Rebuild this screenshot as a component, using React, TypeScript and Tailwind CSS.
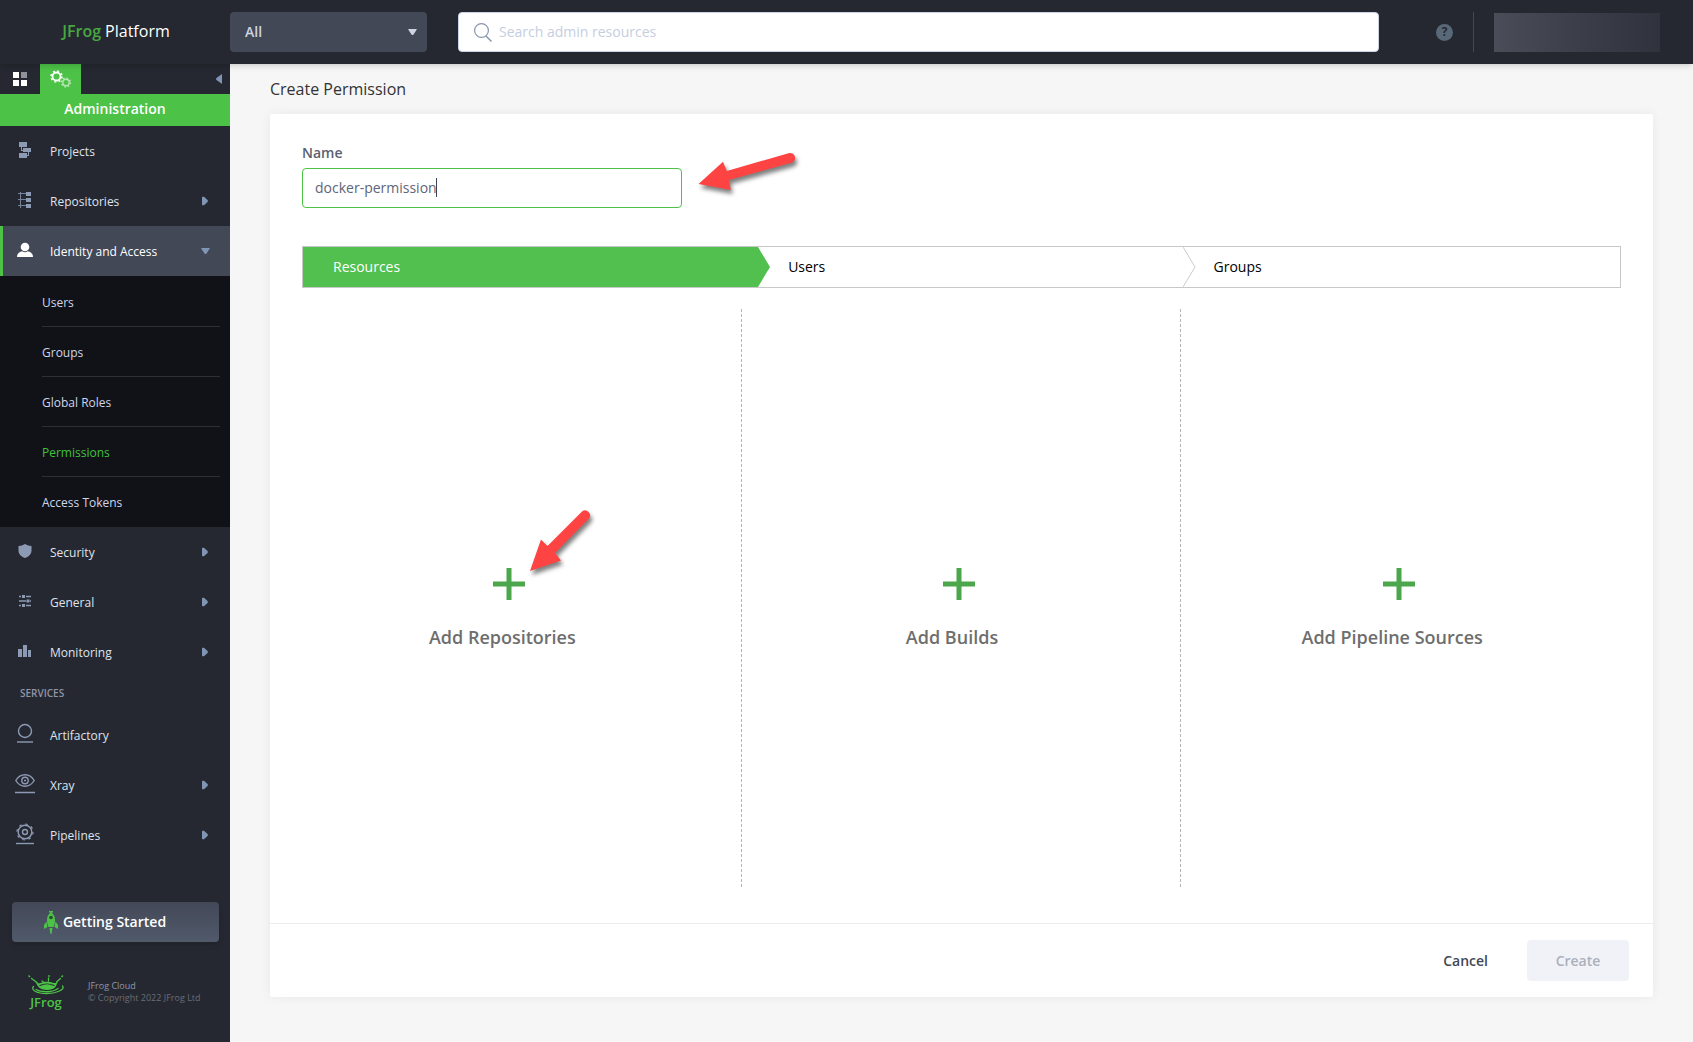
import { useState } from "react";
import type { ReactNode } from "react";

interface NavItem {
  label: string;
  icon: ReactNode;
  expandable?: boolean;
}

const ProjectsIcon = () => (
  <svg width="14" height="18" viewBox="0 0 14 18" fill="currentColor">
    <rect x="1" y="1" width="8" height="5" />
    <rect x="5" y="7" width="8" height="4" />
    <rect x="1" y="12" width="8" height="5" />
    <path d="M3 6h1v3h1v1H3zM10 11h1v4H9v-1h1z" />
  </svg>
);

const RepositoriesIcon = () => (
  <svg width="14" height="18" viewBox="0 0 14 18" fill="currentColor">
    <path d="M2 1h1v16H2zM0 2h8v1H0zM0 8h8v1H0zM0 14h8v1H0z" opacity="0.8" />
    <rect x="8" y="1" width="5" height="4" />
    <rect x="8" y="7" width="5" height="4" />
    <rect x="8" y="13" width="5" height="4" />
  </svg>
);

const UserIcon = () => (
  <svg width="16" height="16" viewBox="0 0 16 16" fill="#fff">
    <circle cx="8" cy="5" r="4.3" />
    <path d="M0 15c0-3.500 2.600-5.300 5.200-5.700a5 5 0 0 0 5.600 0C13.400 9.700 16 11.500 16 15z" />
  </svg>
);

const ShieldIcon = () => (
  <svg width="14" height="16" viewBox="0 0 14 16" fill="currentColor">
    <path d="M7 1c2 1.300 4 1.800 6.500 2v4.500c0 3.500-2.500 6.300-6.500 7.500C3 13.800.5 11 .5 7.500V3C3 2.800 5 2.300 7 1z" />
  </svg>
);

const SlidersIcon = () => (
  <svg width="14" height="14" viewBox="0 0 14 14" fill="none" stroke="currentColor">
    <path d="M1 2.500h2M8 2.500h5M1 7h7M12 7h1M1 11.500h2M8 11.500h5" strokeWidth="1.500" />
    <path d="M5.500 1v3M10 5.500v3M5.500 10v3" strokeWidth="3" />
  </svg>
);

const BarsIcon = () => (
  <svg width="14" height="14" viewBox="0 0 14 14" fill="currentColor">
    <path d="M0 5h4v8H0zM5 1h4v12H5zM10 6h3v7h-3z" />
  </svg>
);

const ArtifactoryIcon = () => (
  <svg width="18" height="22" viewBox="0 0 18 22" fill="none" stroke="currentColor" strokeWidth="1.400">
    <circle cx="9" cy="8" r="6.500" />
    <path d="M1 19h16" />
  </svg>
);

const XrayIcon = () => (
  <svg width="20" height="22" viewBox="0 0 20 22" fill="none" stroke="currentColor" strokeWidth="1.400">
    <path d="M.8 7.500C3 3.800 6.200 1.800 10 1.800s7 2 9.200 5.700c-2.200 3.700-5.400 5.700-9.200 5.700S3 11.200.8 7.500z" />
    <circle cx="10" cy="7.500" r="3.200" />
    <path d="M9 7.500h2M0 19.500h20" />
  </svg>
);

const PipelinesIcon = () => (
  <svg width="18" height="22" viewBox="0 0 18 22" fill="none" stroke="currentColor" strokeWidth="1.400">
    <circle cx="9" cy="9" r="6.800" />
    <circle cx="9" cy="9" r="8" strokeWidth="1.200" strokeDasharray="2.600 3.680" />
    <circle cx="9" cy="9" r="2.500" />
    <path d="M0 20.500h18" />
  </svg>
);

const mainItems: NavItem[] = [
  { label: "Projects", icon: <ProjectsIcon /> },
  { label: "Repositories", icon: <RepositoriesIcon />, expandable: true }
];

const settingItems: NavItem[] = [
  { label: "Security", icon: <ShieldIcon />, expandable: true },
  { label: "General", icon: <SlidersIcon />, expandable: true },
  { label: "Monitoring", icon: <BarsIcon />, expandable: true }
];

const serviceItems: NavItem[] = [
  { label: "Artifactory", icon: <ArtifactoryIcon /> },
  { label: "Xray", icon: <XrayIcon />, expandable: true },
  { label: "Pipelines", icon: <PipelinesIcon />, expandable: true }
];

const identityItems = ["Users", "Groups", "Global Roles", "Permissions", "Access Tokens"];

function NavRow({ item }: { item: NavItem }) {
  return (
    <a href="#" className="flex h-[50px] items-center pr-[22px] pl-[13px] text-[#dfe3ef]">
      <span className="mb-[2px] flex w-6 justify-center text-[#8c9ab3]">{item.icon}</span>
      <span className="ml-[13px] flex-1 pt-px">{item.label}</span>
      {item.expandable && (
        <svg width="6" height="10" viewBox="0 0 6 10" fill="#8095b3">
          <path d="M0 1.500q0-1 1-.8h1L5.500 4q.8 1 0 2L2 9.300H1q-1 .2-1-.8z" />
        </svg>
      )}
    </a>
  );
}

function Sidebar() {
  return (
    <aside className="flex w-[230px] shrink-0 flex-col bg-[#252830] text-xs">
      <div className="flex h-[30px] items-center">
        <button type="button" aria-label="Application" className="flex h-full w-10 items-center justify-center">
          <svg width="14" height="14" viewBox="0 0 14 14" fill="#fff">
            <path d="M0 0h6v6H0zM0 8h6v6H0zM8 8h6v6H8z" />
            <path d="M8 0h6v6H8z" fill="#8f9299" />
          </svg>
        </button>
        <button
          type="button"
          aria-label="Administration"
          className="flex h-full w-[41px] items-center justify-center bg-[#4cc247]"
        >
          <svg width="22" height="18" viewBox="0 0 22 18" fill="none" stroke="#fff">
            <circle cx="6.500" cy="6.500" r="4" strokeWidth="1.800" />
            <circle cx="6.500" cy="6.500" r="5.500" strokeWidth="1.500" strokeDasharray="2 2.320" />
            <g opacity="0.6">
              <circle cx="16" cy="12.500" r="3.200" strokeWidth="1.400" />
              <circle cx="16" cy="12.500" r="4.500" strokeWidth="1.300" strokeDasharray="1.600 1.930" />
            </g>
          </svg>
        </button>
        <button type="button" aria-label="Collapse menu" className="mr-2 ml-auto">
          <svg width="6" height="10" viewBox="0 0 6 10" fill="#8095b3">
            <path d="M6 0v10L.5 6q-1-1 0-2z" />
          </svg>
        </button>
      </div>
      <div className="flex h-8 items-center justify-center bg-[#4cc247] pb-[2px] text-sm font-semibold text-white">
        Administration
      </div>

      <nav className="flex flex-col">
        {mainItems.map((item) => (
          <NavRow key={item.label} item={item} />
        ))}

        <a href="#" className="flex h-[50px] items-center border-l-[3px] border-[#4cc247] bg-[#434857] pr-5 pl-[10px] text-white">
          <span className="mb-[2px] flex w-6 justify-center">
            <UserIcon />
          </span>
          <span className="ml-[13px] flex-1 pt-px">Identity and Access</span>
          <svg width="9" height="6" viewBox="0 0 9 6" fill="#8095b3">
            <path d="M1 0h7q1.500 0 .5 1L5.500 5.500q-1 1-2 0L.5 1Q-.5 0 1 0z" />
          </svg>
        </a>
        <ul className="bg-[#111217] pt-px pr-[10px] pl-[42px]">
          {identityItems.map((label) => (
            <li key={label} className="border-b border-[#2d2f36] last:border-transparent">
              <a
                href="#"
                className={
                  label === "Permissions"
                    ? "flex h-[49px] items-center pt-[2px] text-[#3fc23a]"
                    : "flex h-[49px] items-center pt-[2px] text-[#cfd6ea]"
                }
              >
                {label}
              </a>
            </li>
          ))}
        </ul>

        {settingItems.map((item) => (
          <NavRow key={item.label} item={item} />
        ))}

        <h2 className="flex h-[33px] items-center pl-5 text-[10px] font-semibold text-[#9094a8]">SERVICES</h2>

        {serviceItems.map((item) => (
          <NavRow key={item.label} item={item} />
        ))}
      </nav>

      <div className="mt-auto pr-[11px] pb-[33px] pl-3">
        <button
          type="button"
          className="flex h-10 w-full items-center justify-center gap-1 rounded-sm bg-linear-to-b from-[#434857] to-[#505a6b] pr-[22px] text-sm font-semibold text-white shadow-md"
        >
          <svg width="16" height="24" viewBox="0 0 16 24" fill="#4cc247">
            <path d="M6 1h4v1.500H6zM8 2c3 2.500 4 5 4 8 0 3-.8 5-1.500 7h-5C4.800 15 4 13 4 10c0-3 1-5.500 4-8z" />
            <path d="M3.500 11.500 1 15v4l3.500-2zM12.500 11.500 15 15v4l-3.500-2zM6.500 18h3L8.500 24h-1z" />
            <circle cx="8" cy="7.500" r="1.800" fill="#2c4a35" />
          </svg>
          Getting Started
        </button>
        <div className="mt-[33px] flex items-center pl-4">
          <div className="flex w-9 flex-col items-center text-[#4cc247]">
            <svg width="36" height="20" viewBox="0 0 36 20" fill="none" stroke="currentColor" strokeLinecap="round">
              <path d="M1 1l.5.500M34.500 1l-.5.500M21 .8v.4" strokeWidth="1.600" />
              <path d="M3.500 3.500 9 7.500M32.500 3.500 28.500 7M20.500 3v3M14 6l2 1.500" strokeWidth="1.300" />
              <path
                d="M7 6.500c2 1.500 4 2.500 6 1.300 3-1.500 9-1.500 12 0 2 .7 4-.3 5-1.300-1 2-1.500 4-3 6-3 3.300-13 3.300-16 0-1.500-1.500-2.500-4-4-6z"
                fill="currentColor"
                stroke="none"
              />
              <path d="M12 10.500c4-2 10-2 14 0" stroke="#252830" strokeWidth="1.100" />
              <path d="M5.500 11.500c-3 4 4 7 13 7s19-3.500 16-7.500M8 14.500c5 3 17 3 22-1" strokeWidth="1.300" />
            </svg>
            <span className="text-[13px] leading-[14px] font-semibold">JFrog</span>
          </div>
          <div className="ml-6 text-[9px] leading-3 text-[#6a6d77]">
            <p className="text-[#9296ab]">JFrog Cloud</p>
            <p>© Copyright 2022 JFrog Ltd</p>
          </div>
        </div>
      </div>
    </aside>
  );
}

function Header() {
  return (
    <header className="relative z-10 flex h-16 shrink-0 items-center bg-[#252830] pr-[33px] shadow-md">
      <div className="flex w-[230px] shrink-0 items-baseline justify-center gap-1 pb-[2px] pl-[2px] text-base text-white">
        <span className="font-semibold text-[#46a840]">JFrog</span>
        <span>Platform</span>
      </div>
      <div className="relative w-[197px] shrink-0">
        <select
          aria-label="Project"
          className="h-10 w-full appearance-none rounded-sm bg-[#434857] px-[15px] text-sm font-semibold text-[#cfd3e0]"
        >
          <option>All</option>
        </select>
        <svg
          className="pointer-events-none absolute top-[17px] right-[10px]"
          width="9"
          height="6"
          viewBox="0 0 9 6"
          fill="#cfd3e0"
        >
          <path d="M1 0h7q1.500 0 .5 1L5.500 5.500q-1 1-2 0L.5 1Q-.5 0 1 0z" />
        </svg>
      </div>
      <label className="ml-[31px] flex h-10 flex-1 items-center gap-[7px] rounded-sm border border-[#cbd3e8] bg-white pl-[15px]">
        <svg width="18" height="19" viewBox="0 0 18 19" fill="none" stroke="#8a94ad" strokeWidth="1.200">
          <circle cx="7.500" cy="7.500" r="6.900" />
          <path d="M12 13l5.500 5.500" strokeWidth="1.500" />
        </svg>
        <input
          type="search"
          aria-label="Search admin resources"
          placeholder="Search admin resources"
          className="flex-1 text-sm outline-none placeholder:text-[#c5cee0]"
        />
      </label>
      <button
        type="button"
        aria-label="Help"
        className="ml-[57px] flex size-[17px] items-center justify-center rounded-full bg-[#596877] text-xs font-bold text-[#252830]"
      >
        ?
      </button>
      <div className="ml-5 h-10 w-px bg-[#434857]" />
      <div className="ml-5 h-[39px] w-[166px] bg-linear-to-r from-[#4a4d58] via-[#3c3e49] to-[#30323d]" />
    </header>
  );
}

function StepArrow({ active = false }: { active?: boolean }) {
  return (
    <svg className="absolute top-0 left-full z-10" width="13" height="40" viewBox="0 0 13 40" fill={active ? "#52c04e" : "#fff"}>
      <path d="M0 0l12 20L0 40" stroke={active ? "none" : "#cccccc"} />
    </svg>
  );
}

function Steps() {
  return (
    <ol className="mt-[38px] flex h-[42px] border border-[#c8c8c8] text-sm text-black">
      <li className="relative flex flex-[457] items-center bg-[#52c04e] pl-[30px] text-white">
        <button type="button">Resources</button>
        <StepArrow active />
      </li>
      <li className="relative flex flex-[425] items-center pl-[30px]">
        <button type="button">Users</button>
        <StepArrow />
      </li>
      <li className="flex flex-[437] items-center pl-[30px]">
        <button type="button">Groups</button>
      </li>
    </ol>
  );
}

function AddButton({ label, children }: { label: string; children?: ReactNode }) {
  return (
    <button type="button" className="relative flex flex-col items-center gap-[23px] text-lg font-semibold text-[#6e6e6e]">
      <svg className="ml-[14px]" width="32" height="32" viewBox="0 0 32 32" fill="#4ca64c">
        <path d="M13.500 0h5v13.500H32v5H18.500V32h-5V18.500H0v-5h13.500z" />
      </svg>
      {label}
      {children}
    </button>
  );
}

export default function App() {
  const [name, setName] = useState("docker-permission");

  return (
    <div className="flex min-h-screen flex-col bg-[#f6f6f6] font-['Open_Sans',sans-serif]">
      <Header />
      <div className="flex flex-1">
        <Sidebar />
        <main className="flex flex-1 flex-col px-10 pb-[45px]">
          <h1 className="flex h-[50px] items-center text-base text-[#333]">Create Permission</h1>
          <section className="flex flex-1 flex-col rounded-xs bg-white shadow-[0_0_12px_rgba(0,0,0,0.06)]">
            <div className="flex flex-1 flex-col px-8 pt-7">
              <label htmlFor="permission-name" className="text-sm leading-[22px] font-semibold text-[#5a6172]">
                Name
              </label>
              <div className="relative mt-1 w-[380px]">
                <input
                  id="permission-name"
                  type="text"
                  value={name}
                  onChange={(e) => setName(e.target.value)}
                  className="h-10 w-full rounded-sm border border-[#4cc247] px-3 pb-[2px] text-sm text-[#5f6577] caret-transparent outline-none"
                />
                <span className="pointer-events-none absolute top-[10px] left-[134px] h-[19px] w-px bg-[#3c4356]" />
                <svg
                  className="pointer-events-none absolute -top-4 left-[392px] drop-shadow-[2px_4px_2px_rgba(0,0,0,0.5)]"
                  width="110"
                  height="50"
                  viewBox="0 0 110 50"
                  fill="#fd4443"
                >
                  <path d="M4.500 32 29 9.700l3.800 9.300L94.600 1.200a5 5 0 0 1 3 9.600L34.800 28l2 10z" />
                </svg>
              </div>

              <Steps />

              <div className="mt-[21px] mb-9 grid flex-1 grid-cols-3">
                <div className="flex items-center justify-center border-r border-dashed border-[#b5b5b5] pt-[22px] pr-[38px]">
                  <AddButton label="Add Repositories">
                    <svg
                      className="pointer-events-none absolute -top-[60px] left-[97px] drop-shadow-[2px_4px_2px_rgba(0,0,0,0.5)]"
                      width="70"
                      height="70"
                      viewBox="0 0 70 70"
                      fill="#fd4443"
                    >
                      <path d="M4 63 15 31.500l6.500 6.500L56 3.500a5 5 0 0 1 7 7L29 45l6 7.500z" />
                    </svg>
                  </AddButton>
                </div>
                <div className="flex items-center justify-center border-r border-dashed border-[#b5b5b5] pt-[22px] pr-[18px]">
                  <AddButton label="Add Builds" />
                </div>
                <div className="flex items-center justify-center pt-[22px] pr-[18px]">
                  <AddButton label="Add Pipeline Sources" />
                </div>
              </div>
            </div>

            <footer className="flex h-[74px] items-center justify-end gap-[39px] border-t border-[#ededed] pr-6 text-sm">
              <button type="button" className="font-semibold text-[#414857]">
                Cancel
              </button>
              <button type="button" disabled className="h-[41px] w-[102px] rounded-sm bg-[#f0f2f8] font-semibold text-[#abb0ba]">
                Create
              </button>
            </footer>
          </section>
        </main>
      </div>
    </div>
  );
}
